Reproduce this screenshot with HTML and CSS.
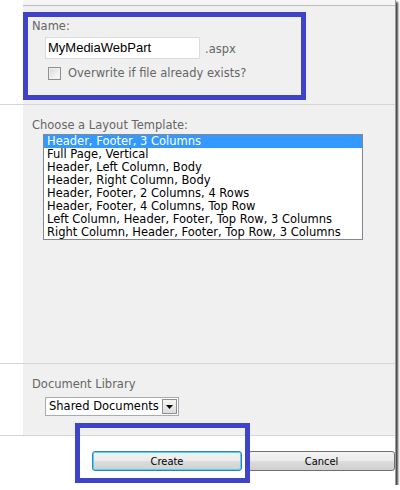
FILE: index.html
```html
<!DOCTYPE html>
<html>
<head>
<meta charset="utf-8">
<link rel="stylesheet" href="styles.css">
</head>
<body>
<div class="window">
  <div class="row top"><div class="lc"></div><div class="rc strip"></div></div>

  <section class="row sec1">
    <div class="lc"></div>
    <div class="rc">
      <div class="label">Name:</div>
      <div class="name-line">
        <div class="textbox">MyMediaWebPart</div>
        <span class="ext">.aspx</span>
      </div>
      <div class="check-line">
        <span class="checkbox"></span>
        <span class="check-label">Overwrite if file already exists?</span>
      </div>
    </div>
  </section>

  <section class="row sec2">
    <div class="lc"></div>
    <div class="rc">
      <div class="label">Choose a Layout Template:</div>
      <ul class="listbox">
        <li class="selected">Header, Footer, 3 Columns</li>
        <li>Full Page, Vertical</li>
        <li>Header, Left Column, Body</li>
        <li>Header, Right Column, Body</li>
        <li>Header, Footer, 2 Columns, 4 Rows</li>
        <li>Header, Footer, 4 Columns, Top Row</li>
        <li>Left Column, Header, Footer, Top Row, 3 Columns</li>
        <li>Right Column, Header, Footer, Top Row, 3 Columns</li>
      </ul>
    </div>
  </section>

  <section class="row sec3">
    <div class="lc"></div>
    <div class="rc">
      <div class="label">Document Library</div>
      <div class="select">
        <span class="select-text">Shared Documents</span>
        <span class="select-btn"><svg width="7" height="4" viewBox="0 0 7 4"><path d="M0 0H7L3.5 4Z" fill="#000"/></svg></span>
      </div>
    </div>
  </section>

  <div class="footer">
    <button class="btn btn-create">Create</button>
    <button class="btn btn-cancel">Cancel</button>
  </div>

  <div class="mark mark1"></div>
  <div class="mark mark2"></div>
</div>
</body>
</html>
```

FILE: styles.css
```css
html, body {
  margin: 0;
  padding: 0;
  background: #ffffff;
}

.window {
  position: relative;
  width: 395px;
  height: 485px;
  background: #ffffff;
  border-right: 1px solid #9c9c9c;
  box-shadow: 2px 2px 2px rgba(0, 0, 0, 0.75);
  overflow: visible;
  font-family: "DejaVu Sans", Verdana, sans-serif;
  font-size: 11.5px;
}

.row {
  display: grid;
  grid-template-columns: 23px 1fr;
}

.lc {
  background: #ffffff;
}

.rc {
  background: #f0f0f0;
}

.top {
  height: 6px;
}

.top .rc.strip {
  background: #f5f5f5;
  border-bottom: 1px solid #bcbcbc;
}

.sec1, .sec2, .sec3 {
  border-bottom: 1px solid #d6d6d6;
}

.sec1 .rc {
  height: 98px;
  box-sizing: border-box;
  padding: 14px 0 0 9px;
}

.sec2 .rc {
  height: 258px;
  box-sizing: border-box;
  padding: 14px 0 0 9px;
}

.sec3 .rc {
  height: 71px;
  box-sizing: border-box;
  padding: 14px 0 0 9px;
}

.label {
  color: #666666;
  line-height: 13px;
  height: 13px;
  white-space: nowrap;
}

.name-line {
  display: flex;
  align-items: center;
  margin: 4px 0 0 13px;
}

.textbox {
  width: 155px;
  height: 22px;
  box-sizing: border-box;
  border: 1px solid #dcdcdc;
  background: #ffffff;
  font-family: "Liberation Sans", Arial, sans-serif;
  font-size: 13px;
  line-height: 20px;
  padding-left: 2px;
  color: #000;
}

.ext {
  margin-left: 5px;
  color: #666666;
  padding-top: 2px;
}

.check-line {
  display: flex;
  align-items: center;
  margin: 8px 0 0 16px;
}

.checkbox {
  width: 13px;
  height: 13px;
  box-sizing: border-box;
  border: 1px solid #8e8f8f;
  background: linear-gradient(135deg, #d6d6d6 0%, #f4f4f4 70%, #ffffff 100%);
  box-shadow: inset 0 0 0 1px #f0f0f0;
}

.check-label {
  margin-left: 7px;
  color: #666666;
  line-height: 13px;
}

.listbox {
  list-style: none;
  margin: 2px 0 0 11px;
  padding: 0;
  width: 320px;
  height: 106px;
  box-sizing: border-box;
  border: 1px solid #828790;
  background: #ffffff;
  color: #000000;
}

.listbox li {
  height: 13px;
  line-height: 13px;
  padding-left: 3px;
  white-space: nowrap;
}

.listbox li.selected {
  background: #3399ff;
  color: #ffffff;
}

.select {
  display: flex;
  align-items: center;
  margin: 6px 0 0 13px;
  width: 134px;
  height: 19px;
  box-sizing: border-box;
  border: 1px solid #a5acb5;
  background: #ffffff;
}

.select-text {
  flex: 1;
  font-size: 11.5px;
  line-height: 17px;
  padding-left: 3px;
  color: #000;
  white-space: nowrap;
}

.select-btn {
  display: flex;
  align-items: center;
  justify-content: center;
  width: 15px;
  height: 15px;
  box-sizing: border-box;
  margin-right: 1px;
  border: 1px solid #8f8f8f;
  background: linear-gradient(#f6f6f6, #dcdcdc);
}

.footer {
  display: flex;
  padding: 15px 0 0 92px;
  gap: 6px;
}

.btn {
  height: 20px;
  box-sizing: border-box;
  font-family: "DejaVu Sans Condensed", Tahoma, sans-serif;
  font-size: 11px;
  color: #000;
  border-radius: 3px;
  background: linear-gradient(#f3f3f3 0%, #ebebeb 50%, #dddddd 51%, #cfcfcf 100%);
  padding: 0;
  margin: 0;
}

.btn-create {
  width: 150px;
  border: 1px solid #3c7fb1;
  box-shadow: inset 0 0 0 1px #48d3ff;
}

.btn-cancel {
  width: 147px;
  border: 1px solid #707070;
}

.mark {
  position: absolute;
  border: 5px solid #3f43c8;
  box-sizing: border-box;
}

.mark1 {
  left: 23px;
  top: 12px;
  width: 283px;
  height: 88px;
}

.mark2 {
  left: 75px;
  top: 423px;
  width: 175px;
  height: 60px;
}
```
